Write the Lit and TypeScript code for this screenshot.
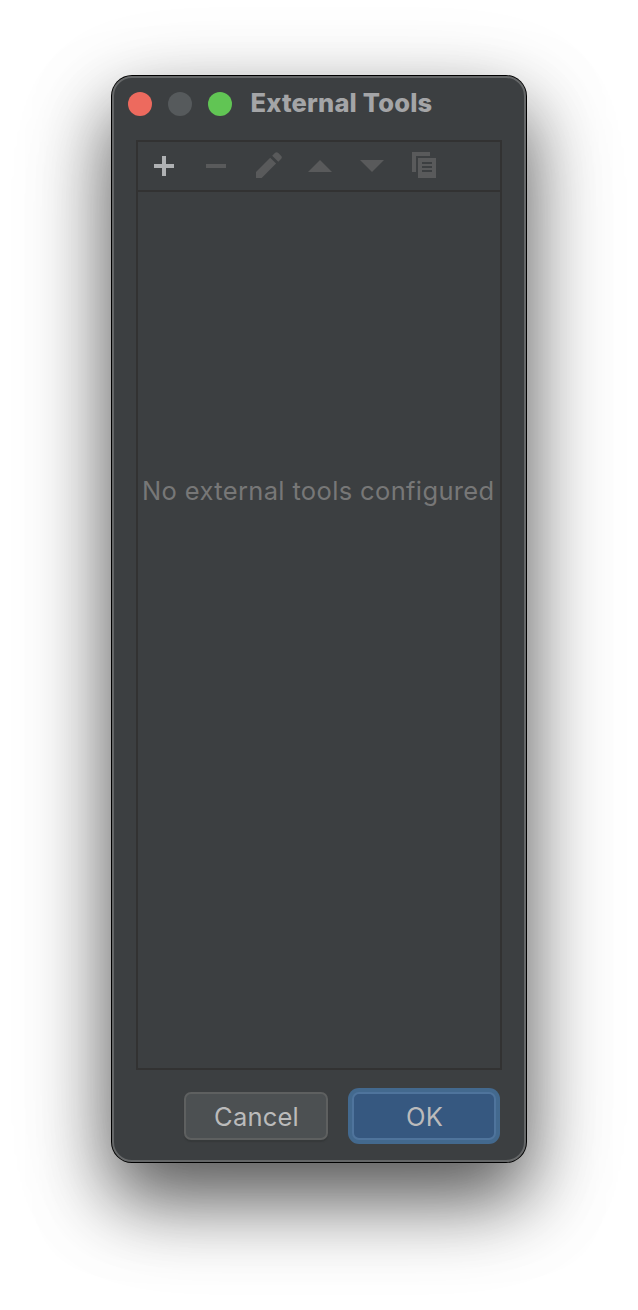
import { LitElement, html, css, svg } from "lit";
import { customElement } from "lit/decorators.js";

const icons = [
  { name: "Add", on: true, shape: svg`<path d="M12 6h4v8h8v4h-8v8h-4v-8H4v-4h8z"/>` },
  { name: "Remove", on: false, shape: svg`<path d="M4 14h20v4H4z"/>` },
  { name: "Edit", on: false, shape: svg`<path d="M2 21.9 16.2 7.7 22.1 13.6 7.7 28H2z M18.2 5.7 20.9 3Q22.6 1.3 24.3 3L27 5.7Q28.7 7.4 27 9.1L24.3 11.8z" />` },
  { name: "Up", on: false, shape: svg`<path d="M2 22 14 10 26 22z"/>` },
  { name: "Down", on: false, shape: svg`<path d="M2 10h24L14 22z"/>` },
  { name: "Copy", on: false, shape: svg`<path d="M2 2h18v4H6v16H2z"/><path fill-rule="evenodd" d="M8 8h18v20H8z M12 12v2h10v-2z M12 16v2h10v-2z M12 20v2h10v-2z"/>` },
];

@customElement("app-root")
export class AppRoot extends LitElement {
  static styles = css`
    :host {
      display: block;
      box-sizing: border-box;
      height: 1310px;
      padding: 76px 112px 148px;
      overflow: hidden;
      background: #fff;
      font-family: Inter, "Liberation Sans", sans-serif;
    }
    .window {
      box-sizing: border-box;
      height: 1086px;
      border: 2px solid #656768;
      border-radius: 20px;
      background: #3c3f41;
      box-shadow: 0 0 0 1px #000, 0 36px 72px rgba(0, 0, 0, 0.58), 0 32px 104px rgba(0, 0, 0, 0.2);
      display: flex;
      flex-direction: column;
      padding: 0 22px 20px;
    }
    .titlebar {
      display: flex;
      align-items: center;
      height: 52px;
      margin: 0 -8px 10px;
      gap: 16px;
    }
    .light { width: 24px; height: 24px; border-radius: 50%; background: #565a5c; }
    .close { background: #ed6a5e; }
    .zoom { background: #61c554; }
    .title {
      margin: 0 0 3px 2.5px;
      font-size: 25.5px;
      line-height: 31px;
      font-weight: 800;
      letter-spacing: 0.18px;
      color: #a4a5a7;
      white-space: nowrap;
    }
    .panel {
      box-sizing: border-box;
      height: 930px;
      border: 2px solid #323232;
      display: flex;
      flex-direction: column;
    }
    .toolbar {
      box-sizing: border-box;
      height: 50px;
      border-bottom: 2px solid #323232;
      display: flex;
      gap: 24px;
      padding: 8px 12px;
    }
    .tool { width: 28px; height: 32px; fill: #595a5b; }
    .enabled { fill: #afb1b3; }
    .empty {
      padding: 283px 1.4px 0 0;
      text-align: center;
      font-size: 25.5px;
      line-height: 32px;
      letter-spacing: 0.36px;
      color: #777777;
      white-space: nowrap;
    }
    .actions {
      display: flex;
      justify-content: flex-end;
      gap: 24px;
      padding: 22px 6px 0 0;
    }
    .button {
      box-sizing: border-box;
      width: 144px;
      height: 48px;
      padding: 2px 0 0 1px;
      border: 2px solid #5e6060;
      border-radius: 7px;
      background: #4c5052;
      box-shadow: 0 2px 1px #36393a;
      color: #bbb;
      font: 400 25.5px/42px Inter, "Liberation Sans", sans-serif;
      letter-spacing: 0.2px;
      text-align: center;
    }
    .primary {
      border-color: #4f749c;
      background: #365880;
      box-shadow: 0 0 0 4px #43698e;
    }
  `;

  render() {
    return html`
      <div class="window">
        <div class="titlebar">
          <span class="light close"></span>
          <span class="light"></span>
          <span class="light zoom"></span>
          <span class="title">External Tools</span>
        </div>
        <div class="panel">
          <div class="toolbar">
            ${icons.map((i) => html`<svg class="tool ${i.on ? "enabled" : ""}" viewBox="0 0 28 32" aria-label=${i.name}>${i.shape}</svg>`)}
          </div>
          <div class="empty">No external tools configured</div>
        </div>
        <div class="actions">
          <button class="button">Cancel</button>
          <button class="button primary">OK</button>
        </div>
      </div>
    `;
  }
}
